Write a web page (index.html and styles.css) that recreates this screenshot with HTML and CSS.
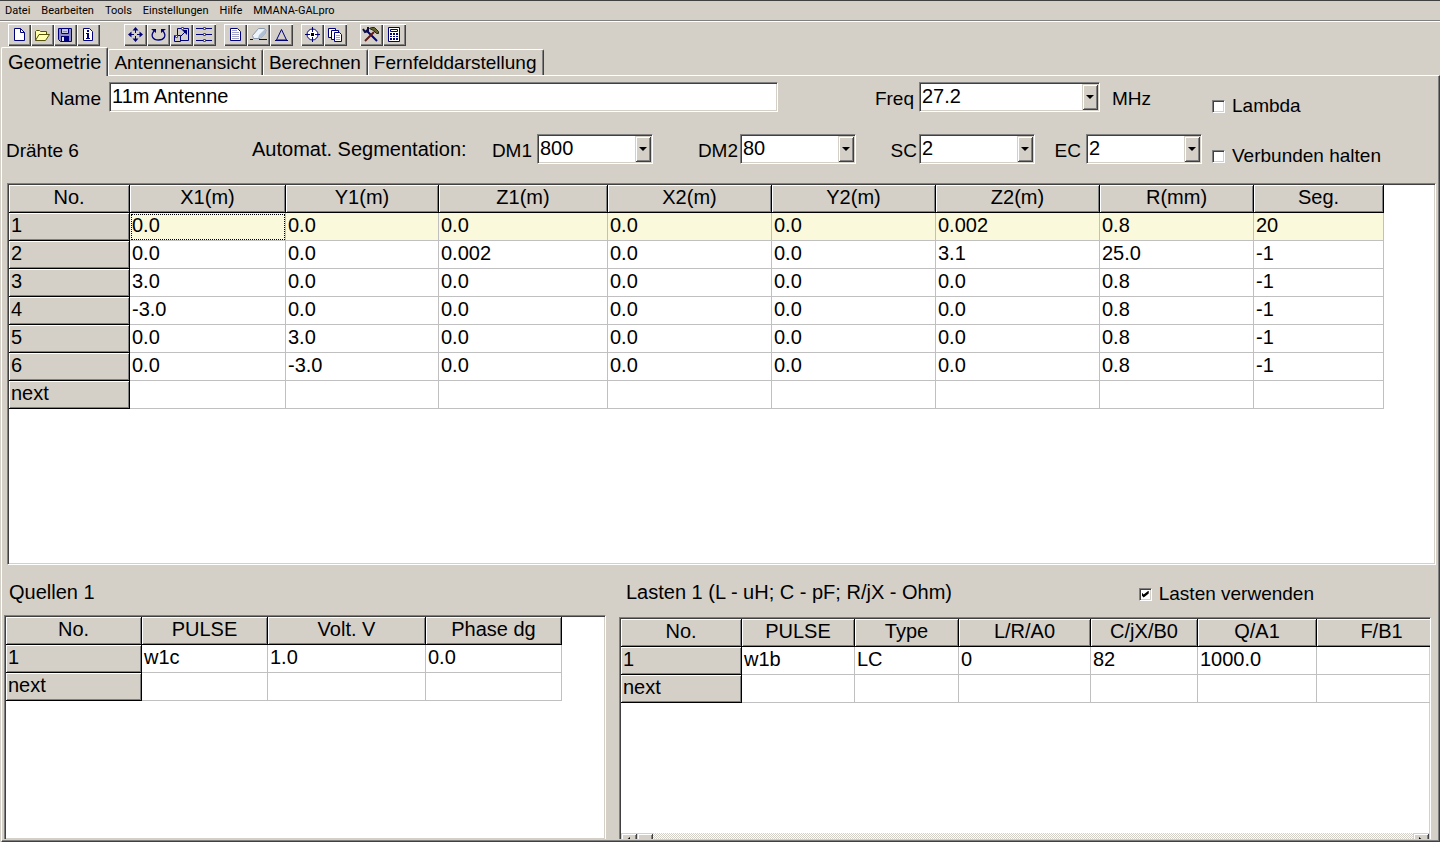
FILE: index.html
```html
<!DOCTYPE html>
<html lang="de">
<head>
<meta charset="utf-8">
<title>MMANA-GALpro</title>
<link rel="stylesheet" href="styles.css">
</head>
<body>
<nav class="menu">
  <button>Datei</button><button>Bearbeiten</button><button>Tools</button><button>Einstellungen</button><button>Hilfe</button><button>MMANA-GALpro</button>
</nav>
<div class="toolbar">
  <div class="group group-file">
    <button class="tool" aria-label="Neu"><svg viewBox="0 0 23 22"><path class="paper" d="M6.500 4.500h6l4 4v8h-10z"/><path class="line" d="M12.500 4.500v4h4"/></svg></button>
    <button class="tool" aria-label="Öffnen"><svg viewBox="0 0 23 22"><path class="folder" d="M4.500 16.500v-9l1-1h3l1 1h6v3"/><path class="folder" d="M4.500 16.500l3.500-6h10.500l-4 6z"/></svg></button>
    <button class="tool" aria-label="Speichern"><svg viewBox="0 0 23 22"><path fill="#8d8dc4" stroke="#00007b" d="M4.500 4.500h13v13h-11l-2-2z"/><path fill="#c8c8e0" stroke="#00007b" d="M7.500 4.500h7v5h-7z"/><path stroke="#8d8dc4" d="M9 7.500h4"/><path fill="#00007b" d="M7 12h8v6H7z"/><path fill="#e4e4f0" d="M8 13h2v4H8z"/></svg></button>
    <button class="tool" aria-label="Info"><svg viewBox="0 0 23 22"><path class="paper" d="M6.500 4.500h6l3 3v9h-9z"/><path class="solid" d="M10 6h2v2h-2zM9 9h3v5h1v1H9v-1h1v-4H9z"/></svg></button>
  </div>
  <div class="group group-edit">
    <button class="tool" aria-label="Verschieben"><svg viewBox="0 0 23 22"><path class="line" d="M11.500 5v4M11.500 12v4M6 10.500h4M13 10.500h4"/><path class="solid" d="M11.500 3l3 3.500h-6zM11.500 18l3-3.500h-6zM4 10.500l3.500-3v6zM19 10.500l-3.500-3v6z"/></svg></button>
    <button class="tool" aria-label="Drehen"><svg viewBox="0 0 23 22"><path fill="none" stroke="#00007b" stroke-width="1.300" d="M7 7c-4 5-1 9 4.500 9s8.500-4 4.500-9"/><path class="solid" d="M4 5h5v4zM19 5h-5v4z"/></svg></button>
    <button class="tool" aria-label="Skalieren"><svg viewBox="0 0 23 22"><path class="line" d="M7.500 11V4.500h11v12H11M4.500 11.500h6v6h-6zM10.500 12.500l5-5"/><path class="solid" d="M12 6h5v5z"/><path class="mark" d="M11.500 3.500h2v2h-2zM5.500 11.500h2v2h-2z"/></svg></button>
    <button class="tool" aria-label="Segmente"><svg viewBox="0 0 23 22"><path class="line" d="M3 4.500h16M3 10.500h16M3 16.500h16"/><path class="mark" d="M10.500 3.500h2v2h-2zM10.500 9.500h2v2h-2zM10.500 15.500h2v2h-2z"/></svg></button>
  </div>
  <div class="group group-view">
    <button class="tool" aria-label="Beschreibung"><svg viewBox="0 0 23 22"><path class="paper" d="M6.500 4.500h7l3 3v9h-10z"/><path class="pale" d="M8 6.500h5M8 8.500h7M8 10.500h7M8 12.500h7M8 14.500h7"/></svg></button>
    <button class="tool" aria-label="Löschen"><svg viewBox="0 0 23 22"><path fill="#eef4fc" stroke="#8a98ac" d="M5.500 11.500l6-7h6l1.500 2-1 3-5 5H6.500z"/><path fill="#aebfd6" d="M11 14l1-3 6-6 1 2-1 3-5 4z"/><path class="line" d="M3 15.500h3M12 15.500h8"/></svg></button>
    <button class="tool" aria-label="Dreieck"><svg viewBox="0 0 23 22"><path fill="none" stroke="#00007b" d="M11.500 5.500l5 10.500h-10z"/><path class="line" d="M5 16.500h13"/></svg></button>
  </div>
  <div class="group group-optim">
    <button class="tool" aria-label="Ziel"><svg viewBox="0 0 23 22"><circle cx="11.500" cy="10.500" r="5.500" fill="#fff" stroke="#00007b"/><path class="line" d="M11.500 3v5M11.500 13v5M4 10.500h5M14 10.500h5"/><path fill="#000" d="M10 9h3v3h-3z"/></svg></button>
    <button class="tool" aria-label="Kopieren"><svg viewBox="0 0 23 22"><path class="paper" d="M4.500 4.500h7v9h-7z"/><path class="paper" d="M7.500 6.500h7v9h-7z"/><path class="paper" d="M10.500 8.500h5l2 2v7h-7z"/><path class="pale" d="M12 11.500h4M12 13.500h4M12 15.500h4"/></svg></button>
  </div>
  <div class="group">
    <button class="tool" aria-label="Einstellungen"><svg viewBox="0 0 23 22"><path fill="none" stroke="#00007b" stroke-width="2" d="M6 6l11 11"/><path fill="none" stroke="#101040" stroke-width="2" d="M3 5l2 3 3-1V3"/><path fill="none" stroke="#601818" stroke-width="2" d="M14 8l-9 9"/><path fill="#64622c" stroke="#282810" d="M9.500 4.500l2-1h3l4 4v2h-2l-3-3z"/></svg></button>
    <button class="tool" aria-label="Rechner"><svg viewBox="0 0 23 22"><path class="paper" d="M5.500 3.500h11v14h-11z"/><path class="line" d="M7.500 5.500h7v2h-7z"/><path class="solid" d="M7 9h2v2H7zM10 9h2v2h-2zM13 9h2v2h-2zM7 12h2v1H7zM10 12h2v1h-2zM13 12h2v1h-2zM7 14h2v2H7zM10 14h2v2h-2zM13 14h2v2h-2z"/></svg></button>
  </div>
</div>

<div class="tabs" role="tablist">
  <button class="tab active" role="tab" aria-selected="true">Geometrie</button><button class="tab" role="tab">Antennenansicht</button><button class="tab" role="tab">Berechnen</button><button class="tab" role="tab">Fernfelddarstellung</button>
</div>

<main class="page">
  <form class="form">
    <div class="fields">
      <div class="row row-name">
        <label class="caption end" for="name">Name</label>
        <input class="text" id="name" value="11m Antenne">
        <div class="field"><label class="caption" for="freq">Freq</label><span class="combo wide"><select id="freq"><option>27.2</option></select></span></div>
        <span class="caption unit">MHz</span>
      </div>
      <div class="row row-seg">
        <span class="caption">Drähte 6</span>
        <span class="title">Automat. Segmentation:</span>
        <div class="field"><label class="caption" for="dm1">DM1</label><span class="combo"><select id="dm1"><option>800</option></select></span></div>
        <div class="field tight"><label class="caption" for="dm2">DM2</label><span class="combo"><select id="dm2"><option>80</option></select></span></div>
        <div class="field tight"><label class="caption" for="sc">SC</label><span class="combo"><select id="sc"><option>2</option></select></span></div>
        <div class="field"><label class="caption" for="ec">EC</label><span class="combo"><select id="ec"><option>2</option></select></span></div>
      </div>
    </div>
    <div class="checks">
      <label class="check"><input type="checkbox">Lambda</label>
      <label class="check"><input type="checkbox">Verbunden halten</label>
    </div>
  </form>

  <section class="sheet wires">
    <table>
      <colgroup><col class="w121"><col class="w156"><col class="w153"><col class="w169"><col class="w164"><col class="w164"><col class="w164"><col class="w154"><col class="w130"></colgroup>
      <thead><tr><th>No.</th><th>X1(m)</th><th>Y1(m)</th><th>Z1(m)</th><th>X2(m)</th><th>Y2(m)</th><th>Z2(m)</th><th>R(mm)</th><th>Seg.</th></tr></thead>
      <tbody>
        <tr class="current"><th>1</th><td class="focus">0.0</td><td>0.0</td><td>0.0</td><td>0.0</td><td>0.0</td><td>0.002</td><td>0.8</td><td>20</td></tr>
        <tr><th>2</th><td>0.0</td><td>0.0</td><td>0.002</td><td>0.0</td><td>0.0</td><td>3.1</td><td>25.0</td><td>-1</td></tr>
        <tr><th>3</th><td>3.0</td><td>0.0</td><td>0.0</td><td>0.0</td><td>0.0</td><td>0.0</td><td>0.8</td><td>-1</td></tr>
        <tr><th>4</th><td>-3.0</td><td>0.0</td><td>0.0</td><td>0.0</td><td>0.0</td><td>0.0</td><td>0.8</td><td>-1</td></tr>
        <tr><th>5</th><td>0.0</td><td>3.0</td><td>0.0</td><td>0.0</td><td>0.0</td><td>0.0</td><td>0.8</td><td>-1</td></tr>
        <tr><th>6</th><td>0.0</td><td>-3.0</td><td>0.0</td><td>0.0</td><td>0.0</td><td>0.0</td><td>0.8</td><td>-1</td></tr>
        <tr><th>next</th><td></td><td></td><td></td><td></td><td></td><td></td><td></td><td></td></tr>
      </tbody>
    </table>
  </section>

  <div class="lower">
    <section class="panel sources">
      <header class="panel-head"><h2 class="title">Quellen 1</h2></header>
      <div class="sheet fill">
        <table>
          <colgroup><col class="w136"><col class="w126"><col class="w158"><col class="w136"></colgroup>
          <thead><tr><th>No.</th><th>PULSE</th><th>Volt. V</th><th>Phase dg</th></tr></thead>
          <tbody>
            <tr><th>1</th><td>w1c</td><td>1.0</td><td>0.0</td></tr>
            <tr><th>next</th><td></td><td></td><td></td></tr>
          </tbody>
        </table>
      </div>
    </section>
    <section class="panel loads">
      <header class="panel-head">
        <h2 class="title">Lasten 1 (L - uH; C - pF; R/jX - Ohm)</h2>
        <label class="check"><input type="checkbox" checked>Lasten verwenden</label>
      </header>
      <div class="sheet fill">
        <table>
          <colgroup><col class="w121"><col class="w113"><col class="w104"><col class="w132"><col class="w107"><col class="w119"><col class="w130"></colgroup>
          <thead><tr><th>No.</th><th>PULSE</th><th>Type</th><th>L/R/A0</th><th>C/jX/B0</th><th>Q/A1</th><th>F/B1</th></tr></thead>
          <tbody>
            <tr><th>1</th><td>w1b</td><td>LC</td><td>0</td><td>82</td><td>1000.0</td><td></td></tr>
            <tr><th>next</th><td></td><td></td><td></td><td></td><td></td><td></td></tr>
          </tbody>
        </table>
        <div class="scroll">
          <button class="scroll-btn" aria-label="Nach links"><svg viewBox="0 0 14 14"><path d="M8 3v7L4 6.500z"/></svg></button>
          <span class="scroll-btn"></span>
          <button class="scroll-btn last" aria-label="Nach rechts"><svg viewBox="0 0 14 14"><path d="M5 3v7l4-3.500z"/></svg></button>
        </div>
      </div>
    </section>
  </div>
</main>
</body>
</html>
```
FILE: styles.css
```css
:root {
  --face: #d4d0c8;
  --gray: #808080;
  --dark: #404040;
  --navy: #00007b;
}

* { box-sizing: border-box; }

body {
  margin: 0;
  min-height: 100vh;
  display: flex;
  flex-direction: column;
  background: var(--face);
  color: #000;
  font: 20px/24px "Liberation Sans", Arial, sans-serif;
}

button, input, select { font: inherit; color: inherit; margin: 0; }
button { padding: 0; border: 0; background: none; }

.menu {
  display: flex;
  height: 21px;
  padding-left: 5px;
  gap: 11px;
  border-top: 1px solid var(--dark);
  border-bottom: 1px solid var(--gray);
  font: 11px/18px Roboto, sans-serif;
}

.toolbar {
  display: flex;
  height: 26px;
  padding: 2px 0 0 8px;
  border-top: 1px solid #fff;
}
.group { display: flex; }
.group-file { margin-right: 24px; }
.group-edit { margin-right: 8px; }
.group-view { margin-right: 8px; }
.group-optim { margin-right: 13px; }

.tool {
  width: 23px;
  height: 22px;
  box-shadow: inset 1px 1px #fff, inset -1px -1px var(--dark), inset -2px -2px var(--gray);
}
.tool svg { display: block; width: 23px; height: 22px; }
.paper { fill: #fff; stroke: var(--navy); }
.line { fill: none; stroke: var(--navy); }
.folder { fill: #ffffae; stroke: #55520c; }
.solid { fill: var(--navy); }
.mark { fill: #fff; stroke: #f00; }
.pale { fill: none; stroke: #a0a0c8; }

.tabs {
  display: flex;
  align-items: flex-end;
  height: 28px;
  padding-left: 1px;
}
.tab {
  height: 26px;
  padding: 0 6px 0 5px;
  border-top: 1px solid #fff;
  border-left: 1px solid #fff;
  border-right: 1px solid var(--dark);
  box-shadow: inset -1px 0 var(--gray);
  border-radius: 2px 2px 0 0;
  font-size: 19px;
  line-height: 20px;
}
.tab.active {
  height: 29px;
  margin: 0 0 -1px;
  padding: 0 6px;
  font-size: 20px;
  line-height: 20px;
  background: var(--face);
  z-index: 1;
}

.page {
  flex: 1;
  display: flex;
  flex-direction: column;
  margin-left: 1px;
  padding: 6px 2px 2px;
  border-top: 1px solid #fff;
  border-left: 1px solid #fff;
  border-right: 1px solid var(--dark);
  border-bottom: 1px solid var(--dark);
  box-shadow: inset -1px -1px var(--gray);
}

.form { display: flex; margin-bottom: 15px; }
.fields { flex: 1; display: grid; align-content: start; gap: 22px; margin-right: 10px; }
.row { display: grid; align-items: center; height: 30px; padding-left: 2px; }
.row-name { grid-template-columns: 95px 1fr 322px 102px; }
.row-seg { grid-template-columns: 246px 1fr 165px 203px 179px 167px; }
.caption { padding-top: 4px; font-size: 19px; }
.title { margin: 0; font-size: 20px; font-weight: normal; }
.end { text-align: right; }
.unit { padding-left: 12px; }
.field { display: flex; align-items: center; justify-content: flex-end; gap: 5px; }
.field.tight { gap: 2px; }

.text, .combo {
  height: 30px;
  background: #fff;
  border: 1px solid;
  border-color: var(--gray) #fff #fff var(--gray);
  border-radius: 0;
  box-shadow: inset 1px 1px var(--dark), inset -1px -1px var(--face);
}
.text { width: auto; margin-left: 8px; padding: 0 2px 2px; outline: 0; }
.combo { position: relative; width: 116px; }
.combo.wide { width: 181px; }
.combo select {
  display: block;
  width: 100%;
  height: 26px;
  padding: 0 0 0 2px;
  border: 0;
  background: none;
  appearance: none;
  line-height: 26px;
}
.combo::before {
  content: "";
  position: absolute;
  top: 1px;
  right: 1px;
  bottom: 1px;
  width: 16px;
  background: var(--face);
  box-shadow: inset 1px 1px var(--face), inset -1px -1px var(--dark), inset 2px 2px #fff, inset -2px -2px var(--gray);
  pointer-events: none;
}
.combo::after {
  content: "";
  position: absolute;
  top: 12px;
  right: 5px;
  border: 4px solid transparent;
  border-top-color: #000;
  border-bottom: 0;
  pointer-events: none;
}

.checks { width: 225px; display: grid; gap: 26px; align-content: start; padding-top: 12px; }
.check { display: flex; align-items: center; gap: 7px; font-size: 19px; }
.check input {
  appearance: none;
  width: 13px;
  height: 13px;
  background: #fff;
  border: 1px solid;
  border-color: var(--gray) #fff #fff var(--gray);
  box-shadow: inset 1px 1px var(--dark), inset -1px -1px var(--face);
}
.check input:checked::before {
  content: "";
  display: block;
  width: 7px;
  height: 7px;
  margin: 2px;
  background: #000;
  clip-path: polygon(0 28%, 0 71%, 28% 100%, 100% 42%, 100% 0, 28% 57%);
}

.sheet {
  position: relative;
  overflow: hidden;
  background: #fff;
  border: 1px solid;
  border-color: var(--gray) #fff #fff var(--gray);
  padding: 1px;
  box-shadow: inset 1px 1px var(--dark), inset -1px -1px var(--face);
}
.wires { min-height: 382px; margin: 0 1px 0 3px; }

table { width: 0; table-layout: fixed; border-collapse: separate; border-spacing: 0; }
th, td {
  height: 28px;
  padding: 0 0 3px 2px;
  border-right: 1px solid #c0c0c0;
  border-bottom: 1px solid #c0c0c0;
  text-align: left;
  vertical-align: top;
  font-weight: normal;
  white-space: nowrap;
}
th {
  background: var(--face);
  border-color: #000;
  box-shadow: inset 1px 1px #fff, inset -1px -1px var(--gray);
}
thead th { text-align: center; padding-right: 2px; }
.current td { background: #fbf9dc; }
.current .focus { outline: 1px dotted #000; outline-offset: -2px; }

.w104 { width: 104px; }
.w107 { width: 107px; }
.w113 { width: 113px; }
.w119 { width: 119px; }
.w121 { width: 121px; }
.w126 { width: 126px; }
.w130 { width: 130px; }
.w132 { width: 132px; }
.w136 { width: 136px; }
.w153 { width: 153px; }
.w154 { width: 154px; }
.w156 { width: 156px; }
.w158 { width: 158px; }
.w164 { width: 164px; }
.w169 { width: 169px; }

.lower { flex: 1; display: flex; gap: 13px; padding-right: 6px; }
.panel { display: flex; flex-direction: column; min-width: 0; }
.sources { flex: 602 1 0; }
.loads { flex: 812 1 0; }
.panel-head { display: flex; justify-content: space-between; height: 50px; padding: 15px 117px 0 5px; }
.loads .panel-head { height: 52px; padding-left: 7px; }
.loads .check { padding-top: 2px; height: 26px; gap: 7px; }
.fill { flex: 1; border-bottom: 0; padding-bottom: 0; }

.scroll {
  position: absolute;
  left: 1px;
  right: 1px;
  bottom: 0;
  height: 6px;
  display: flex;
  overflow: hidden;
  background: repeating-conic-gradient(#fff 0 25%, var(--face) 0 50%) 0 0 / 2px 2px;
}
.scroll-btn {
  flex: none;
  width: 16px;
  height: 16px;
  background: var(--face);
  box-shadow: inset 1px 1px var(--face), inset -1px -1px var(--dark), inset 2px 2px #fff, inset -2px -2px var(--gray);
}
.scroll-btn svg { display: block; width: 14px; height: 14px; margin-left: 1px; }
.scroll-btn.last { margin-left: auto; }
```
